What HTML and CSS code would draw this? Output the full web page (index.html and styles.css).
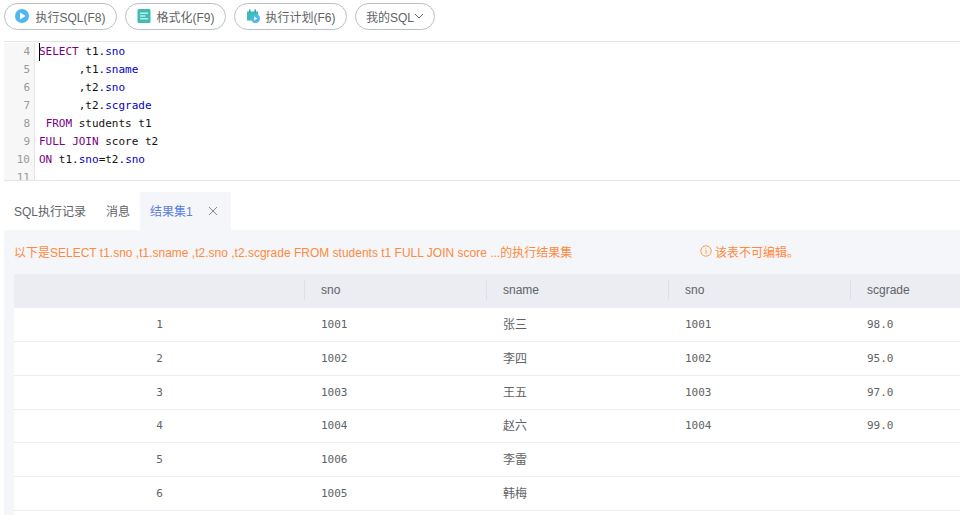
FILE: index.html
```html
<!DOCTYPE html>
<html lang="en">
<head>
  <meta charset="UTF-8">
  <title>SQL</title>
  <link rel="stylesheet" href="styles.css">
</head>
<body>

  <div class="toolbar">
    <button class="btn">
      <svg class="icon" viewBox="0 0 14 14"><circle cx="7" cy="7" r="7" fill="#4fb6ee"/><path d="M5 3.6v6.8L10.6 7z" fill="#fff"/></svg>
      执行SQL(F8)
    </button>
    <button class="btn">
      <svg class="icon" viewBox="0 0 14 14"><rect width="13" height="14" x="0.5" rx="1.5" fill="#3dbdb4"/><path d="M3 3.5h8v1.4H3zM3 6.3h5.5v1.4H3zM3 9.1h8v1.4H3z" fill="#c4ecea"/></svg>
      格式化(F9)
    </button>
    <button class="btn">
      <svg class="icon" viewBox="0 0 14 14"><path d="M1 2.5h11v9H1z" fill="#3dbdb4"/><path d="M3 .5h1.5v3H3zM8.5 .5H10v3H8.5z" fill="#2aa39b"/><circle cx="9.5" cy="9.5" r="4.5" fill="#4fb6ee"/><path d="M8.2 7.4v4.2l3.3-2.1z" fill="#fff"/></svg>
      执行计划(F6)
    </button>
    <button class="btn">
      我的SQL<svg class="chevron" viewBox="0 0 10 6"><path d="M1 1l4 4 4-4" fill="none" stroke="#666" stroke-width="1"/></svg>
    </button>
  </div>

  <div class="editor">
    <div class="gutter">
      <div>4</div><div>5</div><div>6</div><div>7</div><div>8</div><div>9</div><div>10</div><div>11</div>
    </div>
    <div class="code">
      <i class="cursor"></i>
      <div class="line"><b>SELECT</b> t1.<u>sno</u></div>
      <div class="line">      ,t1.<u>sname</u></div>
      <div class="line">      ,t2.<u>sno</u></div>
      <div class="line">      ,t2.<u>scgrade</u></div>
      <div class="line"> <b>FROM</b> students t1</div>
      <div class="line"><b>FULL</b> <b>JOIN</b> score t2</div>
      <div class="line"><b>ON</b> t1.<u>sno</u>=t2.<u>sno</u></div>
      <div class="line">&nbsp;</div>
    </div>
  </div>

  <div class="tabs">
    <div class="tab">SQL执行记录</div>
    <div class="tab">消息</div>
    <div class="tab tab-active">结果集1
      <svg class="close" viewBox="0 0 10 10"><path d="M1 1l8 8M9 1l-8 8" stroke="#888" stroke-width="1" fill="none"/></svg>
    </div>
  </div>

  <div class="panel">
    <div class="notice">
      <span class="notice-text">以下是SELECT t1.sno ,t1.sname ,t2.sno ,t2.scgrade FROM students t1 FULL JOIN score ...的执行结果集</span>
      <span class="notice-warn">
        <svg class="warn-icon" viewBox="0 0 12 12"><circle cx="6" cy="6" r="5.2" fill="none" stroke="#ff9a4d" stroke-width="1"/><path d="M5.5 2.8h1v1h-1zM5.5 4.8h1v4.2h-1z" fill="#ff9a4d"/></svg>
        该表不可编辑。
      </span>
    </div>
    <div class="result-wrap">
      <table class="result">
        <colgroup><col class="col-index"><col class="col-data"><col class="col-data"><col class="col-data"><col class="col-data"></colgroup>
        <thead>
          <tr><th></th><th>sno</th><th>sname</th><th>sno</th><th>scgrade</th></tr>
        </thead>
        <tbody>
          <tr><td class="num">1</td><td>1001</td><td class="cjk">张三</td><td>1001</td><td>98.0</td></tr>
          <tr><td class="num">2</td><td>1002</td><td class="cjk">李四</td><td>1002</td><td>95.0</td></tr>
          <tr><td class="num">3</td><td>1003</td><td class="cjk">王五</td><td>1003</td><td>97.0</td></tr>
          <tr><td class="num">4</td><td>1004</td><td class="cjk">赵六</td><td>1004</td><td>99.0</td></tr>
          <tr><td class="num">5</td><td>1006</td><td class="cjk">李雷</td><td></td><td></td></tr>
          <tr><td class="num">6</td><td>1005</td><td class="cjk">韩梅</td><td></td><td></td></tr>
        </tbody>
      </table>
    </div>
  </div>

</body>
</html>
```

FILE: styles.css
```css
* {
  margin: 0;
  padding: 0;
  box-sizing: border-box;
}

html, body {
  height: 515px;
  overflow: hidden;
}

body {
  font-family: "Liberation Sans", "Noto Sans CJK SC", sans-serif;
  font-size: 12px;
  color: #606266;
  background-color: #fff;
}

.toolbar {
  display: flex;
  gap: 8px;
  padding: 3px 0 0 4px;
  height: 41px;
}

.btn {
  display: flex;
  align-items: center;
  justify-content: center;
  height: 27px;
  padding: 0 4px 1px;
  border: 1px solid #bcbec4;
  border-radius: 14px;
  background-color: #fff;
  color: #606266;
  font-family: inherit;
  font-size: 12px;
  white-space: nowrap;
}

.btn:nth-child(1) { width: 113px; }
.btn:nth-child(2) { width: 101px; }
.btn:nth-child(3) { width: 113px; }
.btn:nth-child(4) { width: 80px; }

.icon {
  width: 14px;
  height: 14px;
  margin-right: 6px;
}

.chevron {
  width: 10px;
  height: 6px;
}

.editor {
  display: flex;
  height: 140px;
  margin-left: 4px;
  padding-top: 1px;
  border-top: 1px solid #e4e4e4;
  border-bottom: 1px solid #e4e4e4;
  overflow: hidden;
  font-family: "DejaVu Sans Mono", monospace;
  font-size: 11px;
  line-height: 18px;
}

.gutter {
  width: 31px;
  flex-shrink: 0;
  padding-right: 4px;
  background-color: #f7f7f7;
  border-right: 1px solid #e4e4e4;
  color: #999;
  text-align: right;
}

.code {
  position: relative;
  padding-left: 4px;
  color: #111;
}

.line {
  white-space: pre;
}

.code b {
  font-weight: normal;
  color: #770088;
}

.code u {
  text-decoration: none;
  color: #0000cc;
}

.cursor {
  position: absolute;
  left: 4px;
  top: 0;
  height: 18px;
  border-left: 1px solid #000;
}

.tabs {
  display: flex;
  height: 38px;
  margin-top: 11px;
  padding-left: 4px;
}

.tab {
  display: flex;
  align-items: center;
  padding: 0 10px 2px;
  color: #606266;
}

.tab-active {
  width: 91px;
  background-color: #f5f6f9;
  color: #5b7fe0;
}

.close {
  width: 10px;
  height: 10px;
  margin: 2px 0 0 15px;
}

.panel {
  display: flex;
  flex-direction: column;
  height: 285px;
  margin-left: 4px;
  padding-left: 10px;
  background-color: #f5f6f9;
}

.notice {
  display: flex;
  align-items: center;
  height: 44px;
  padding-bottom: 2px;
  color: #ff8a3d;
}

.notice-text {
  width: 686px;
}

.notice-warn {
  display: flex;
  align-items: center;
  gap: 3px;
}

.warn-icon {
  width: 12px;
  height: 12px;
}

.result-wrap {
  flex: 1;
  background-color: #fff;
}

.result {
  width: 946px;
  border-collapse: collapse;
  table-layout: fixed;
}

.col-index { width: 291px; }
.col-data { width: 182px; }

.result th {
  position: relative;
  height: 34px;
  padding: 0 0 2px 16px;
  background-color: #ebedf2;
  font-weight: normal;
  text-align: left;
}

.result th + th::before {
  content: "";
  position: absolute;
  left: -1px;
  top: 6px;
  height: 20px;
  border-left: 1px solid #dcdfe6;
}

.result td {
  height: 33.7px;
  padding-left: 16px;
  border-bottom: 1px solid #ebeef5;
  font-family: "DejaVu Sans Mono", monospace;
  font-size: 11px;
}

.result td.num {
  padding-left: 0;
  text-align: center;
}

.result td.cjk {
  padding-bottom: 2px;
  font-family: "Liberation Sans", "Noto Sans CJK SC", sans-serif;
  font-size: 12px;
}
```
